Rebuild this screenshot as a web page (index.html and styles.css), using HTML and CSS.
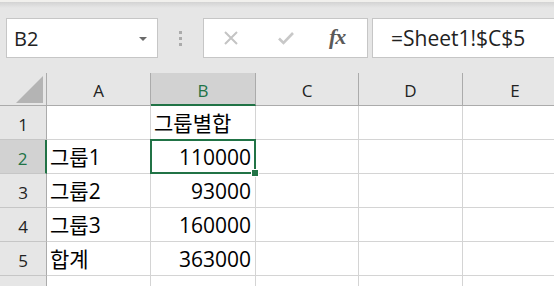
FILE: index.html
```html
<!DOCTYPE html>
<html lang="ko">
<head>
  <meta charset="UTF-8">
  <title>Excel</title>
  <link rel="stylesheet" href="styles.css">
</head>
<body>
  <div class="formula-bar">
    <div class="name-box">
      <span class="name">B2</span>
      <span class="arrow"></span>
    </div>
    <div class="grip">
      <span></span><span></span><span></span>
    </div>
    <div class="func-box">
      <svg class="icon" width="16" height="16" viewBox="0 0 16 16">
        <path d="M2 2 L14 14 M14 2 L2 14" stroke="#c4c4c4" stroke-width="2" fill="none"/>
      </svg>
      <svg class="icon" width="18" height="16" viewBox="0 0 18 16">
        <path d="M2 8.5 L6.5 13 L16 3" stroke="#c8c8c8" stroke-width="2.6" fill="none"/>
      </svg>
      <span class="fx">fx</span>
    </div>
    <div class="formula">=Sheet1!$C$5</div>
  </div>

  <div class="sheet">
    <div class="hd corner">
      <svg width="27" height="27" viewBox="0 0 27 27">
        <polygon points="0,27 27,27 27,0" fill="#b4b4b4"/>
      </svg>
    </div>
    <div class="hd col">A</div>
    <div class="hd col active-col">B</div>
    <div class="hd col">C</div>
    <div class="hd col">D</div>
    <div class="hd col">E</div>

    <div class="hd row">1</div>
    <div class="cell"></div>
    <div class="cell">그룹별합</div>
    <div class="cell"></div>
    <div class="cell"></div>
    <div class="cell"></div>

    <div class="hd row active-row">2</div>
    <div class="cell">그룹1</div>
    <div class="cell num selected">110000</div>
    <div class="cell"></div>
    <div class="cell"></div>
    <div class="cell"></div>

    <div class="hd row">3</div>
    <div class="cell">그룹2</div>
    <div class="cell num">93000</div>
    <div class="cell"></div>
    <div class="cell"></div>
    <div class="cell"></div>

    <div class="hd row">4</div>
    <div class="cell">그룹3</div>
    <div class="cell num">160000</div>
    <div class="cell"></div>
    <div class="cell"></div>
    <div class="cell"></div>

    <div class="hd row">5</div>
    <div class="cell">합계</div>
    <div class="cell num">363000</div>
    <div class="cell"></div>
    <div class="cell"></div>
    <div class="cell"></div>

    <div class="hd row"></div>
    <div class="cell"></div>
    <div class="cell"></div>
    <div class="cell"></div>
    <div class="cell"></div>
    <div class="cell"></div>
  </div>
</body>
</html>
```

FILE: styles.css
```css
:root {
  --bar-bg: #e6e6e6;
  --grid-line: #d4d4d4;
  --head-line: #ababab;
  --green: #217346;
  --text: #000;
}

body {
  margin: 0;
  padding: 0;
  width: 554px;
  height: 286px;
  overflow: hidden;
  background: #fff;
  font-family: "Open Sans", "Noto Sans CJK KR", sans-serif;
  color: var(--text);
}

.formula-bar {
  display: flex;
  align-items: flex-start;
  height: 73px;
  box-sizing: border-box;
  padding: 18px 0 0 6px;
  background:
    linear-gradient(#f1f0ed 0, #f1f0ed 2px, #d3d3d3 2px, #e6e6e6 8px, #e6e6e6 100%);
}

.name-box,
.func-box,
.formula {
  height: 40px;
  box-sizing: border-box;
  background: #fff;
  border: 1px solid #c6c6c6;
}

.name-box {
  width: 152px;
  display: flex;
  align-items: center;
  justify-content: space-between;
  padding: 0 10px 0 7px;
}

.name {
  font-size: 20px;
  color: #222;
}

.arrow {
  width: 0;
  height: 0;
  border-left: 4px solid transparent;
  border-right: 4px solid transparent;
  border-top: 4px solid #6a6a6a;
  margin-top: 1px;
}

.grip {
  width: 45px;
  height: 40px;
  display: flex;
  flex-direction: column;
  align-items: center;
  justify-content: center;
  gap: 3px;
}

.grip span {
  width: 3px;
  height: 3px;
  background: #ababab;
}

.func-box {
  width: 165px;
  display: flex;
  align-items: center;
  padding-left: 19px;
}

.func-box .icon:first-child {
  margin-right: 38px;
}

.func-box .icon:nth-child(2) {
  margin-right: 34px;
}

.fx {
  font-family: "Liberation Serif", serif;
  font-style: italic;
  font-weight: bold;
  font-size: 22px;
  color: #5a5a5a;
  margin-top: -3px;
  letter-spacing: -1px;
}

.formula {
  flex: 1;
  margin-left: 4px;
  margin-right: -2px;
  padding-left: 18px;
  display: flex;
  align-items: center;
  font-size: 21px;
  color: #222;
}

.sheet {
  display: grid;
  width: 568px;
  height: 213px;
  overflow: hidden;
  grid-template-columns: 47px 104px 105px 103px 104px 105px;
  grid-template-rows: 33px 34px 34px 34px 34px 34px 34px;
}

.hd {
  background: var(--bar-bg);
  box-sizing: border-box;
  font-size: 17px;
  color: #222;
  display: flex;
  align-items: center;
  justify-content: center;
}

.col {
  border-right: 1px solid var(--head-line);
  border-bottom: 1px solid var(--head-line);
  padding-top: 2px;
}

.corner {
  border-right: 1px solid var(--head-line);
  border-bottom: 1px solid var(--head-line);
  align-items: flex-end;
  justify-content: flex-end;
  padding: 0 3px 2px 0;
}

.corner svg {
  display: block;
}

.row {
  border-right: 1px solid var(--head-line);
  border-bottom: 1px solid #c6c6c6;
  padding-top: 4px;
}

.active-col {
  background: #d2d2d2;
  color: var(--green);
  border-bottom: 2px solid var(--green);
  padding-top: 3px;
}

.active-row {
  background: #d2d2d2;
  color: var(--green);
  border-right: 2px solid var(--green);
}

.cell {
  position: relative;
  box-sizing: border-box;
  border-right: 1px solid var(--grid-line);
  border-bottom: 1px solid var(--grid-line);
  font-size: 21px;
  line-height: 24px;
  display: flex;
  align-items: flex-end;
  padding: 0 4px 4px 3px;
  white-space: nowrap;
}

.num {
  justify-content: flex-end;
}

.selected::after {
  content: "";
  position: absolute;
  left: -1px;
  top: -1px;
  right: -1px;
  bottom: -1px;
  border: 2px solid var(--green);
}

.selected::before {
  content: "";
  position: absolute;
  right: -4px;
  bottom: -4px;
  width: 6px;
  height: 6px;
  background: var(--green);
  border: 1px solid #fff;
  z-index: 1;
}
```
